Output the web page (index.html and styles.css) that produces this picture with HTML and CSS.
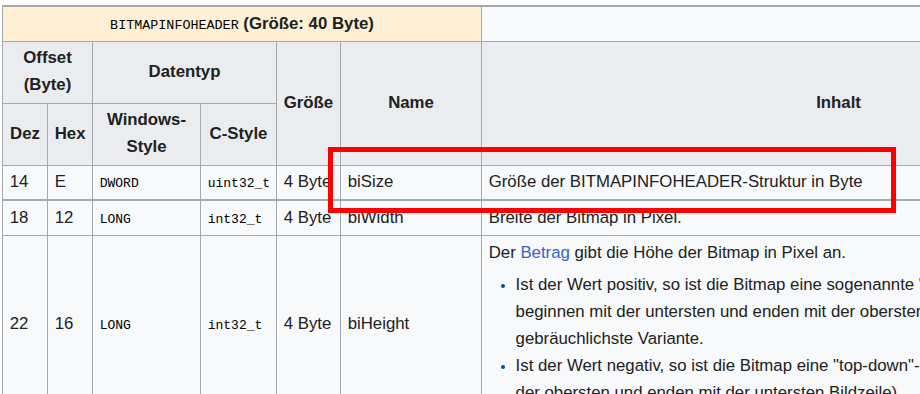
FILE: index.html
```html
<!DOCTYPE html>
<html lang="de">
<head>
<meta charset="utf-8">
<title>BITMAPINFOHEADER</title>
<link rel="stylesheet" href="styles.css">
</head>
<body>
<div class="page">
<table class="wikitable">
  <colgroup>
    <col class="c-dez"><col class="c-hex"><col class="c-win"><col class="c-cstyle"><col class="c-size"><col class="c-name"><col class="c-inhalt">
  </colgroup>
  <tr class="caption-row">
    <th colspan="6" class="struct"><code class="struct-name">BITMAPINFOHEADER</code> (Größe: 40 Byte)</th>
    <td class="blank"></td>
  </tr>
  <tr>
    <th colspan="2">Offset (Byte)</th>
    <th colspan="2">Datentyp</th>
    <th rowspan="2">Größe</th>
    <th rowspan="2">Name</th>
    <th rowspan="2">Inhalt</th>
  </tr>
  <tr>
    <th>Dez</th>
    <th>Hex</th>
    <th>Windows-Style</th>
    <th>C-Style</th>
  </tr>
  <tr class="first-data">
    <td>14</td>
    <td>E</td>
    <td><code>DWORD</code></td>
    <td><code>uint32_t</code></td>
    <td>4 Byte</td>
    <td>biSize</td>
    <td>Größe der BITMAPINFOHEADER-Struktur in Byte</td>
  </tr>
  <tr>
    <td>18</td>
    <td>12</td>
    <td><code>LONG</code></td>
    <td><code>int32_t</code></td>
    <td>4 Byte</td>
    <td>biWidth</td>
    <td>Breite der Bitmap in Pixel.</td>
  </tr>
  <tr>
    <td>22</td>
    <td>16</td>
    <td><code>LONG</code></td>
    <td><code>int32_t</code></td>
    <td>4 Byte</td>
    <td>biHeight</td>
    <td class="long">
      <p>Der <a href="#">Betrag</a> gibt die Höhe der Bitmap in Pixel an.</p>
      <ul>
        <li>Ist der Wert positiv, so ist die Bitmap eine sogenannte "bottom-up"-Bitmap (die Bildzeilen<br>beginnen mit der untersten und enden mit der obersten Bildzeile). Dies ist die<br>gebräuchlichste Variante.</li>
        <li>Ist der Wert negativ, so ist die Bitmap eine "top-down"-Bitmap (die Bildzeilen beginnen mit<br>der obersten und enden mit der untersten Bildzeile).</li>
      </ul>
    </td>
  </tr>
</table>
<div class="highlight" aria-hidden="true"></div>
</div>
</body>
</html>
```
FILE: styles.css
```css
html, body {
  margin: 0;
  padding: 0;
  background: #ffffff;
  overflow: hidden;
}

.page {
  position: relative;
  width: 920px;
  height: 394px;
  overflow: hidden;
  padding: 5px 0 0 2px;
  box-sizing: border-box;
}

.wikitable {
  border-collapse: collapse;
  table-layout: fixed;
  width: 1193px;
  font-family: "Liberation Sans", Arial, sans-serif;
  font-size: 16.8px;
  line-height: 26.9px;
  color: #202122;
  background: #f8f9fa;
  border: 1px solid #a2a9b1;
}

.c-dez { width: 45px; }
.c-hex { width: 45px; }
.c-win { width: 108px; }
.c-cstyle { width: 76px; }
.c-size { width: 64px; }
.c-name { width: 141px; }
.c-inhalt { width: 714px; }

.wikitable th,
.wikitable td {
  border: 1px solid #a2a9b1;
  padding: 3.5px 6.7px;
  vertical-align: middle;
  text-align: left;
}

.wikitable th {
  background: #eaecf0;
  font-weight: bold;
  text-align: center;
}

.caption-row th,
.caption-row td {
  border-top: 2px solid #a2a9b1;
}

.wikitable th.struct {
  background: #ffefd5;
}

.wikitable td.blank {
  background: #f8f9fa;
}

.wikitable code {
  font-family: "Liberation Mono", "Courier New", monospace;
  font-size: 13px;
  line-height: 1;
  font-weight: normal;
  color: #000;
}

.wikitable code.struct-name {
  font-size: 13.4px;
}

.first-data td {
  border-bottom: 2px solid #a2a9b1;
}

.wikitable td.long {
  vertical-align: top;
  white-space: nowrap;
}

.long p {
  margin: 0;
}

.long a {
  color: #3366cc;
  text-decoration: none;
}

.long ul {
  margin: 5px 0 0 26.9px;
  padding: 0;
  list-style-type: disc;
}

.long li {
  margin-bottom: 1px;
  line-height: 26.9px;
}

.long li::marker {
  color: #00528c;
  font-size: 13px;
}

.highlight {
  position: absolute;
  left: 328px;
  top: 147px;
  width: 568px;
  height: 66px;
  border: 5px solid #ff0000;
  box-sizing: border-box;
  pointer-events: none;
}
```
